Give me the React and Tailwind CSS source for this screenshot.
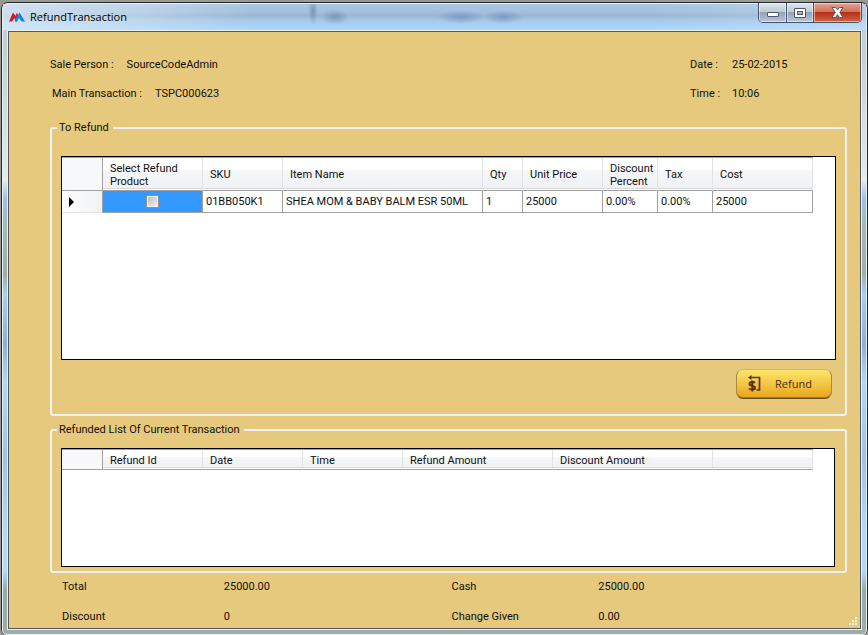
import React from "react";

function WindowButton({ label, className, children }) {
  return (
    <button
      type="button"
      aria-label={label}
      className={`flex items-center justify-center border-r border-[#45536a] shadow-[inset_0_0_0_1px_rgba(255,255,255,0.5)] ${className}`}
    >
      {children}
    </button>
  );
}

function Logo() {
  return (
    <svg width="16" height="10" viewBox="0 0 16 10" aria-hidden="true">
      <path d="M0 9.500L4 0.500L6.500 4L8 0.500L9.500 5L8 9.500L6.500 9.500L5.500 6L3 9.500Z" fill="#d8141c" />
      <path d="M6 9.500L7 5L8.500 4L10.500 0.500L16 9.500L12.500 9.500L10 6L8 9.500Z" fill="#1583e0" />
    </svg>
  );
}

function TitleBar() {
  return (
    <header className="flex h-[26px] items-start justify-between bg-[radial-gradient(14px_8px_at_332px_13px,rgba(90,120,160,.5),transparent),radial-gradient(5px_14px_at_310px_7px,rgba(90,110,140,.5),transparent),radial-gradient(24px_7px_at_458px_13px,rgba(90,125,170,.5),transparent),radial-gradient(20px_7px_at_500px_13px,rgba(90,125,170,.5),transparent),linear-gradient(90deg,rgba(235,243,249,.6)_0,rgba(215,230,242,.45)_140px,rgba(255,255,255,0)_250px,rgba(255,255,255,0)_75%,rgba(230,240,255,.3)_100%),linear-gradient(180deg,#aac6e2_0,#a4c0dc_30%,#9ab7d3_45%,#a5caec_65%,#acd8fb_100%)] pr-1 pl-1">
      <div className="flex h-[26px] items-center gap-[5px] pl-[2px]">
        <Logo />
        <h1 className="font-['Open_Sans','Noto_Sans',sans-serif] text-[11px] leading-4 text-black">RefundTransaction</h1>
      </div>
      <div className="-mt-px flex h-5 overflow-hidden rounded-b-[5px] border border-t-0 border-[#45536a]">
        <WindowButton label="Minimize" className="w-7 bg-[linear-gradient(180deg,#dde5ed_0,#bfcbd8_45%,#93a2b4_50%,#b9c9da_100%)]">
          <svg width="12" height="12" viewBox="0 0 12 12" aria-hidden="true">
            <rect x="0.500" y="5.500" width="11" height="4" rx="0.500" fill="#fff" stroke="#535666" />
          </svg>
        </WindowButton>
        <WindowButton label="Maximize" className="w-[27px] bg-[linear-gradient(180deg,#dde5ed_0,#bfcbd8_45%,#93a2b4_50%,#b9c9da_100%)]">
          <svg width="12" height="10" viewBox="0 0 12 10" aria-hidden="true">
            <rect x="0.500" y="0.500" width="11" height="9" rx="0.500" fill="#fff" stroke="#535666" />
            <rect x="3.500" y="3.500" width="5" height="3" fill="#a9b8c9" stroke="#535666" />
          </svg>
        </WindowButton>
        <WindowButton label="Close" className="w-[47px] border-r-0 bg-[linear-gradient(180deg,#e5a394_0,#d6705a_45%,#b92e17_50%,#d06545_100%)]">
          <svg width="13" height="11" viewBox="0 0 13 11" aria-hidden="true">
            <path d="M1 0.500H4.500L6.500 2.800L8.500 0.500H12L8.800 5.300L12 10.500H8.500L6.500 7.800L4.500 10.500H1L4.200 5.300Z" fill="#fff" stroke="#535666" />
          </svg>
        </WindowButton>
      </div>
    </header>
  );
}

const headCell =
  "border-b border-r border-b-[#a0a0a0] border-r-[#e2e3e5] bg-[linear-gradient(180deg,#fff_0,#fff_35%,#f5f6f8_40%,#f0f1f4_100%)] p-0 pt-px pl-[7px] text-left align-middle font-normal shadow-[inset_0_-1px_0_#fff,inset_0_-2px_0_#d8d9db]";
const cornerCell = "border-b border-r border-[#a0a0a0] bg-[#f7f8fa] p-0";
const bodyCell = "border-b border-r border-[#a0a0a0] bg-white p-0 pl-[3px] whitespace-nowrap";

const columns = [
  { name: "Select Refund Product", width: "w-[100px]" },
  { name: "SKU", width: "w-20" },
  { name: "Item Name", width: "w-[200px]" },
  { name: "Qty", width: "w-10" },
  { name: "Unit Price", width: "w-20" },
  { name: "Discount Percent", width: "w-[55px]" },
  { name: "Tax", width: "w-[55px]" },
  { name: "Cost", width: "w-[100px]" },
];

const items = [
  ["01BB050K1", "SHEA MOM & BABY BALM ESR 50ML", "1", "25000", "0.00%", "0.00%", "25000"],
];

const refundColumns = [
  { name: "Refund Id", width: "w-[100px]" },
  { name: "Date", width: "w-[100px]" },
  { name: "Time", width: "w-[100px]" },
  { name: "Refund Amount", width: "w-[150px]" },
  { name: "Discount Amount", width: "w-40" },
  { name: "", width: "w-[100px]" },
];

function ItemsTable() {
  return (
    <table className="w-[751px] table-fixed border-separate border-spacing-0 border-t border-[#a0a0a0]">
      <colgroup>
        <col className="w-[41px]" />
        {columns.map((c) => (
          <col key={c.name} className={c.width} />
        ))}
      </colgroup>
      <thead>
        <tr className="h-[33px]">
          <td className={cornerCell}></td>
          {columns.map((c) => (
            <th key={c.name} scope="col" className={headCell}>
              {c.name}
            </th>
          ))}
        </tr>
      </thead>
      <tbody>
        {items.map((row) => (
          <tr key={row[0]} className="h-[22px]">
            <td className="border-r border-b border-r-[#a0a0a0] border-b-[#e2e3e5] bg-linear-to-r from-white to-[#f0f1f4] p-0 pl-[7px]">
              <svg width="5" height="10" viewBox="0 0 5 10" className="block" aria-hidden="true">
                <path d="M0 0L5 5L0 10Z" fill="#000" />
              </svg>
            </td>
            <td className="border-r border-b border-[#a0a0a0] bg-[#3399ff] p-0">
              <input
                type="checkbox"
                aria-label={`Select ${row[1]} for refund`}
                className="mx-auto block size-[13px] appearance-none border border-[#8e8f8f] bg-linear-to-br from-[#b4b9c2] to-[#f6f6f6] shadow-[inset_0_0_0_1px_#f4f4f4] checked:bg-[#1d4f91]"
              />
            </td>
            {row.map((value, i) => (
              <td key={i} className={bodyCell}>
                {value}
              </td>
            ))}
          </tr>
        ))}
      </tbody>
    </table>
  );
}

function RefundedTable() {
  return (
    <table className="w-[751px] table-fixed border-separate border-spacing-0 border-t border-[#a0a0a0]">
      <colgroup>
        <col className="w-[41px]" />
        {refundColumns.map((c) => (
          <col key={c.name} className={c.width} />
        ))}
      </colgroup>
      <thead>
        <tr className="h-5">
          <td className={cornerCell}></td>
          {refundColumns.map((c) => (
            <th key={c.name} scope="col" className={headCell}>
              {c.name}
            </th>
          ))}
        </tr>
      </thead>
    </table>
  );
}

function RefundIcon() {
  return (
    <svg width="13" height="17" viewBox="0 0 13 17" aria-hidden="true">
      <path d="M3 2.500H11.500V15H8.500" fill="none" stroke="#5a3418" strokeWidth="1.700" />
      <path d="M0 2.500L3.500 0V5Z" fill="#5a3418" />
      <path d="M7 7.800C6.200 6.900 1.500 6.300 1.500 8.900C1.500 11.200 7 10.200 7 12.700C7 15.200 2 14.900 1 13.500M4.300 5.500V16.500" fill="none" stroke="#5a3418" strokeWidth="2" />
    </svg>
  );
}

function ResizeGrip() {
  return (
    <svg width="8" height="8" viewBox="0 0 8 8" aria-hidden="true" className="absolute right-[3px] bottom-[3px] text-[#f6f0e2]">
      <g fill="currentColor">
        <rect x="6" y="0" width="2" height="2" />
        <rect x="3" y="3" width="2" height="2" />
        <rect x="6" y="3" width="2" height="2" />
        <rect x="0" y="6" width="2" height="2" />
        <rect x="3" y="6" width="2" height="2" />
        <rect x="6" y="6" width="2" height="2" />
      </g>
    </svg>
  );
}

export default function App() {
  return (
    <div className="flex min-h-screen flex-col bg-[#9a9a92] pt-[2px] pl-px font-[Roboto,'Liberation_Sans',Arial,sans-serif] text-[11px] leading-[13px] text-[#101010]">
      <div className="flex grow flex-col rounded-t-[7px] rounded-b-[6px] border border-b-0 border-[#20262c] bg-[#a4c6e8]">
        <div className="flex grow flex-col rounded-t-[6px] rounded-b-[5px] border border-[#e6f1f8] bg-[linear-gradient(180deg,#bdd0e0_0,#c8d0cc_8%,#e6eae8_28%,#9cc0e8_31%,#a8b8b0_36%,#a0aea6_43%,#a8cef4_46%,#8fb0d8_54%,#b2d6fa_60%,#a0c2e8_72%,#b4d8fc_84%,#b4d8fc_90%,#9aaaa2_93%,#a0aca4_100%)]">
          <TitleBar />
          <main className="mx-1 mb-1 flex grow flex-col border border-[#e6f1f8]">
            <div className="relative flex grow flex-col border border-[#4e5a68] bg-[#e6c97d] pb-[5px]">
              <div className="flex justify-between pt-[26px] pl-[41px]">
                <dl className="flex flex-col gap-4">
                  <div className="flex gap-[13px]">
                    <dt>Sale Person :</dt>
                    <dd>SourceCodeAdmin</dd>
                  </div>
                  <div className="flex gap-[13px] pl-[2px]">
                    <dt>Main Transaction :</dt>
                    <dd>TSPC000623</dd>
                  </div>
                </dl>
                <dl className="grid grid-cols-[42px_128px] gap-y-4">
                  <dt>Date :</dt>
                  <dd>25-02-2015</dd>
                  <dt>Time :</dt>
                  <dd>10:06</dd>
                </dl>
              </div>

              <fieldset className="mt-[21px] mr-[13px] ml-[41px] rounded-[3px] border-2 border-[#edf2f3] pr-[9px] pb-[15px] pl-[9px]">
                <legend className="-ml-1 pr-1 pl-[2px]">To Refund</legend>
                <div className="mt-[22px] h-[204px] border border-black bg-white">
                  <ItemsTable />
                </div>
                <div className="mt-[9px] flex justify-end pr-1">
                  <button
                    type="button"
                    className="flex h-[30px] w-24 items-center gap-[14px] rounded-[7px] border border-t-[#c9b878] border-r-[#a88a48] border-b-[#6a4a20] border-l-[#a88a48] bg-linear-to-b from-[#fbe768] to-[#e9a410] pb-px pl-[11px] font-['Open_Sans','Noto_Sans',sans-serif] text-[11px] leading-4 font-medium text-[#4a2c18] shadow-[inset_0_-1px_0_#a87420]"
                  >
                    <RefundIcon />
                    Refund
                  </button>
                </div>
              </fieldset>

              <fieldset className="mt-[7px] mr-[13px] ml-[41px] rounded-[3px] border-2 border-[#edf2f3] pr-[10px] pb-1 pl-[9px]">
                <legend className="-ml-1 pr-1 pl-[2px]">Refunded List Of Current Transaction</legend>
                <div className="mt-3 h-[119px] border border-black bg-white">
                  <RefundedTable />
                </div>
              </fieldset>

              <dl className="mt-[7px] grid grid-cols-[162fr_228fr_147fr_262fr] gap-y-[17px] pl-[53px]">
                <dt>Total</dt>
                <dd>25000.00</dd>
                <dt>Cash</dt>
                <dd>25000.00</dd>
                <dt>Discount</dt>
                <dd>0</dd>
                <dt>Change Given</dt>
                <dd>0.00</dd>
              </dl>
              <ResizeGrip />
            </div>
          </main>
        </div>
      </div>
    </div>
  );
}
